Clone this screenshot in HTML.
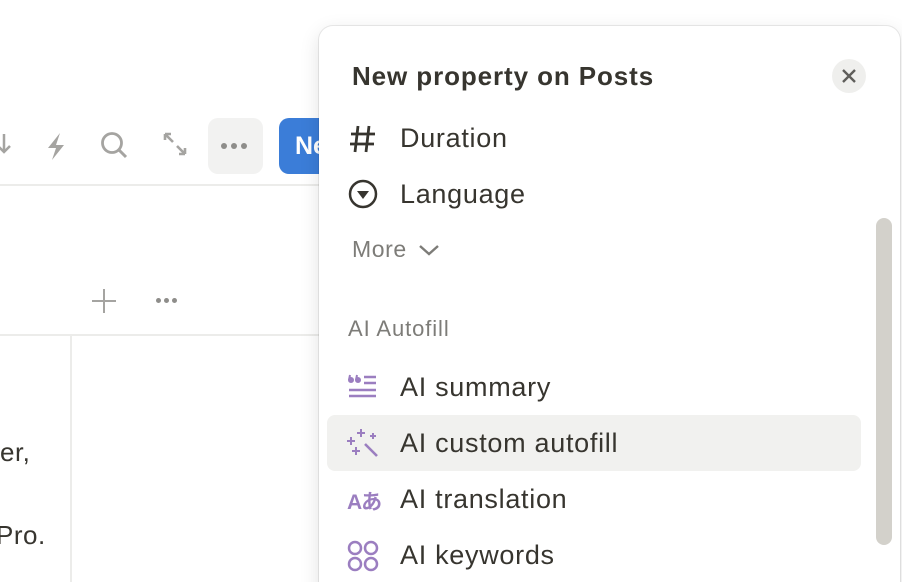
<!DOCTYPE html>
<html><head><style>
html,body{margin:0;width:902px;height:582px;overflow:hidden}
body{background:#fff;font-family:"Liberation Sans",sans-serif;position:relative;color:#37352f}
.a{position:absolute}
.t{position:absolute;left:400px;font-size:27px;letter-spacing:0.7px;color:#37352f;line-height:30px}
</style></head><body>
<div class="a" style="left:0;top:184px;width:320px;height:2px;background:#ececea"></div>
<div class="a" style="left:0;top:334px;width:320px;height:2px;background:#ececea"></div>
<div class="a" style="left:70px;top:336px;width:2px;height:246px;background:#ececea"></div>
<svg class="a" style="left:0;top:128px" width="270" height="36" viewBox="0 0 270 36">
 <path d="M4 6v18M-2 18l6 6 6-6" stroke="#a5a4a1" stroke-width="2.5" fill="none"/>
 <path d="M60 5l-12 15h8l-4 12 12-15h-8z" fill="#a5a4a1"/>
 <circle cx="112" cy="15" r="9.5" stroke="#a5a4a1" stroke-width="2.8" fill="none"/>
 <path d="M119 22l7 7" stroke="#a5a4a1" stroke-width="3"/>
 <path d="M165 6l8 8M165 6v6M165 6h6M185 26l-8-8M185 26v-6M185 26h-6" stroke="#a5a4a1" stroke-width="2.6" fill="none"/>
</svg>
<div class="a" style="left:208px;top:118px;width:55px;height:56px;background:#f2f2f1;border-radius:10px"></div>
<div class="a" style="left:221px;top:143px;width:6px;height:6px;border-radius:3px;background:#8e8d8a;box-shadow:10px 0 #8e8d8a,20px 0 #8e8d8a"></div>
<div class="a" style="left:279px;top:118px;width:60px;height:56px;background:#3b7dd8;border-radius:10px;color:#fff;font-weight:bold;font-size:25px;line-height:56px;padding-left:16px;box-sizing:border-box">New</div>
<div class="a" style="left:92px;top:300px;width:24px;height:2px;background:#a5a4a1"></div>
<div class="a" style="left:103px;top:289px;width:2px;height:24px;background:#a5a4a1"></div>
<div class="a" style="left:156px;top:298px;width:5px;height:5px;border-radius:3px;background:#8e8d8a;box-shadow:8px 0 #8e8d8a,16px 0 #8e8d8a"></div>
<div class="a" style="left:0;top:437px;font-size:26px;letter-spacing:0.5px">er,</div>
<div class="a" style="left:-4px;top:520px;font-size:26px;letter-spacing:0.5px">Pro.</div>
<div class="a" style="left:319px;top:26px;width:581px;height:580px;background:#fff;border-radius:14px;box-shadow:0 0 0 1px rgba(15,15,15,.08),0 6px 20px rgba(15,15,15,.12)"></div>
<div class="a" style="left:352px;top:61px;font-size:26px;letter-spacing:0.9px;font-weight:bold;color:#37352f">New property on Posts</div>
<div class="a" style="left:832px;top:59px;width:34px;height:34px;border-radius:17px;background:#efefed"></div>
<svg class="a" style="left:832px;top:59px" width="34" height="34"><path d="M11 11l12 12M23 11l-12 12" stroke="#5f5e5b" stroke-width="2.4"/></svg>
<svg class="a" style="left:349px;top:124px" width="28" height="30"><path d="M9 2l-3 26M20 2l-3 26M2 10h24M1 20h24" stroke="#37352f" stroke-width="2.8"/></svg>
<div class="t" style="top:123px">Duration</div>
<svg class="a" style="left:347px;top:178px" width="32" height="32"><circle cx="16" cy="16" r="13" stroke="#37352f" stroke-width="2.5" fill="none"/><path d="M10 13h12l-6 8z" fill="#37352f"/></svg>
<div class="t" style="top:179px">Language</div>
<div class="a" style="left:352px;top:236px;font-size:23px;letter-spacing:0.6px;color:#7d7c78">More</div>
<svg class="a" style="left:417px;top:240px" width="24" height="20"><path d="M3 6l9 8 9-8" stroke="#7d7c78" stroke-width="2.4" fill="none"/></svg>
<div class="a" style="left:348px;top:316px;font-size:22px;letter-spacing:0.9px;color:#7d7c78">AI Autofill</div>
<div class="a" style="left:327px;top:415px;width:534px;height:56px;background:#f1f1ef;border-radius:8px"></div>
<svg class="a" style="left:347px;top:373px" width="34" height="30"><circle cx="4" cy="7" r="3" fill="#9b7ec0"/><circle cx="11" cy="7" r="3" fill="#9b7ec0"/><path d="M2 7l1-5M9 7l1-5" stroke="#9b7ec0" stroke-width="2"/><path d="M17 4h12M17 10h12M2 17h27M2 23h27" stroke="#9b7ec0" stroke-width="2.4"/></svg>
<div class="t" style="top:428px;top:372px">AI summary</div>
<svg class="a" style="left:346px;top:428px" width="36" height="32"><path d="M15 1v8M11 5h8M5 9v8M1 13h8M10 19v8M6 23h8M27 5v6M24 8h6" stroke="#9b7ec0" stroke-width="2"/><path d="M19 16l12 12" stroke="#9b7ec0" stroke-width="2.6"/></svg>
<div class="t" style="top:428px">AI custom autofill</div>
<div class="a" style="left:347px;top:486px;font-size:21px;font-weight:bold;color:#9b7ec0;font-family:'Liberation Sans','Noto Sans CJK JP',sans-serif;letter-spacing:-1px">Aあ</div>
<div class="t" style="top:484px">AI translation</div>
<svg class="a" style="left:347px;top:540px" width="34" height="32"><g stroke="#9b7ec0" stroke-width="2.5" fill="none"><circle cx="8" cy="8" r="6"/><circle cx="24" cy="8" r="6"/><circle cx="8" cy="24" r="6"/><circle cx="24" cy="24" r="6"/></g></svg>
<div class="t" style="top:540px">AI keywords</div>
<div class="a" style="left:876px;top:218px;width:16px;height:327px;background:#d3d1cb;border-radius:8px"></div>
</body></html>
